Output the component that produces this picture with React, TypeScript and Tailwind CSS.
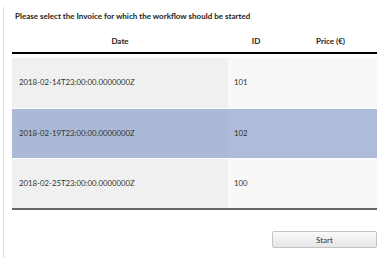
const rows = [
  { date: "2018-02-14T23:00:00.0000000Z", id: "101", price: "", selected: false },
  { date: "2018-02-19T23:00:00.0000000Z", id: "102", price: "", selected: true },
  { date: "2018-02-25T23:00:00.0000000Z", id: "100", price: "", selected: false },
];

const App = () => {
  return (
    <div className="w-[387px] h-[258px] bg-white pl-[3px] pt-[7px] font-['Lato','Open_Sans',sans-serif] text-[#333]">
      <div className="h-full border-l border-[#dedede] pl-[8px] pr-[10px]">
        <p className="pt-[4px] pl-[3px] text-[8px] leading-[10px] font-bold text-[#222]">
          Please select the Invoice for which the workflow should be started
        </p>

        {/* header */}
        <div className="mt-[8px] grid grid-cols-[216px_56px_1fr] h-[25px] items-center border-b-2 border-black text-[8px] font-bold text-[#222]">
          <div className="text-center">Date</div>
          <div className="text-center">ID</div>
          <div className="text-center">Price (€)</div>
        </div>

        <div className="mt-[4px] border-b-2 border-[#666]">
          {rows.map((row) => (
            <div
              key={row.id}
              className="grid grid-cols-[216px_1fr] h-[50px] items-stretch border-t border-white first:border-t-0 first:h-[50px] text-[7.8px]"
            >
              <div className={`flex items-center pl-[7px] ${row.selected ? "bg-[#abb9d6]" : "bg-[#f0f0f0]"}`}>
                {row.date}
              </div>
              <div className={`grid grid-cols-[56px_1fr] items-center pl-[6px] ${row.selected ? "bg-[#aebcd9]" : "bg-[#f8f8f8]"}`}>
                <span>{row.id}</span>
                <span>{row.price}</span>
              </div>
            </div>
          ))}
        </div>

        <div className="flex justify-end mt-[21px]">
          <button className="w-[105px] h-[17px] rounded-[2px] border border-[#c4c4c4] bg-gradient-to-b from-[#fafafa] to-[#e6e6e6] text-[8px] text-[#333]">
            Start
          </button>
        </div>
      </div>
    </div>
  );
};

export default App;
